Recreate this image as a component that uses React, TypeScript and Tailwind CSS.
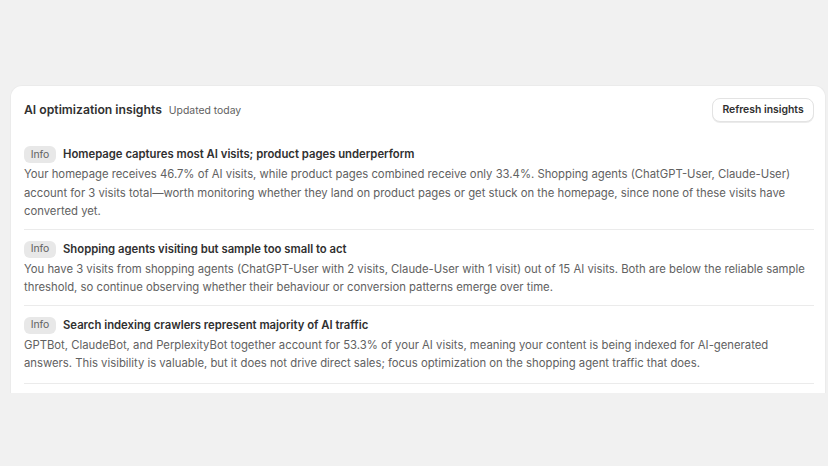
import React from 'react';

type Insight = {
    id: number;
    level: string;
    title: string;
    body: string;
};

const insights: Insight[] = [
    {
        id: 1,
        level: 'Info',
        title: 'Homepage captures most AI visits; product pages underperform',
        body: 'Your homepage receives 46.7% of AI visits, while product pages combined receive only 33.4%. Shopping agents (ChatGPT-User, Claude-User) account for 3 visits total\u2014worth monitoring whether they land on product pages or get stuck on the homepage, since none of these visits have converted yet.',
    },
    {
        id: 2,
        level: 'Info',
        title: 'Shopping agents visiting but sample too small to act',
        body: 'You have 3 visits from shopping agents (ChatGPT-User with 2 visits, Claude-User with 1 visit) out of 15 AI visits. Both are below the reliable sample threshold, so continue observing whether their behaviour or conversion patterns emerge over time.',
    },
    {
        id: 3,
        level: 'Info',
        title: 'Search indexing crawlers represent majority of AI traffic',
        body: 'GPTBot, ClaudeBot, and PerplexityBot together account for 53.3% of your AI visits, meaning your content is being indexed for AI-generated answers. This visibility is valuable, but it does not drive direct sales; focus optimization on the shopping agent traffic that does.',
    },
];

export default function App() {
    return (
        <div className="min-h-[466px] bg-[#f1f1f1] pt-[85px] font-['Inter','Liberation_Sans',sans-serif] antialiased">
            <div className="ml-[10px] mr-[2px] rounded-t-[12px] border border-b-0 border-[#ebebeb] bg-white pl-[13px] pr-[11px] pt-[12px] pb-[9px]">
                {/* Header */}
                <div className="flex items-center justify-between">
                    <div className="flex items-baseline gap-[7px]">
                        <h2 className="text-[12.2px] font-semibold text-[#303030]">AI optimization insights</h2>
                        <span className="text-[10.4px] text-[#616161]">Updated today</span>
                    </div>
                    <button className="h-[24px] w-[102px] rounded-[8px] border border-[#e3e3e3] bg-white text-[10.4px] font-semibold text-[#303030] shadow-[0_1px_0_rgba(0,0,0,0.08)]">
                        Refresh insights
                    </button>
                </div>

                {/* Insight list */}
                <div className="mt-[13px]">
                    {insights.map(insight => (
                        <div key={insight.id} className="border-b border-[#ebebeb] pt-[11px] pb-[8px] last:pb-[10px]">
                            <div className="flex h-[17px] items-center gap-[7px]">
                                <span className="flex h-[17px] w-[32px] items-center justify-center rounded-[6px] bg-[#e8e8e8] text-[10.4px] text-[#616161]">
                                    {insight.level}
                                </span>
                                <h3 className="text-[11.3px] font-semibold text-[#303030]">{insight.title}</h3>
                            </div>
                            <p className="mt-[2px] text-[11.3px] leading-[18.5px] text-[#616161]">{insight.body}</p>
                        </div>
                    ))}
                </div>
            </div>
        </div>
    );
}
